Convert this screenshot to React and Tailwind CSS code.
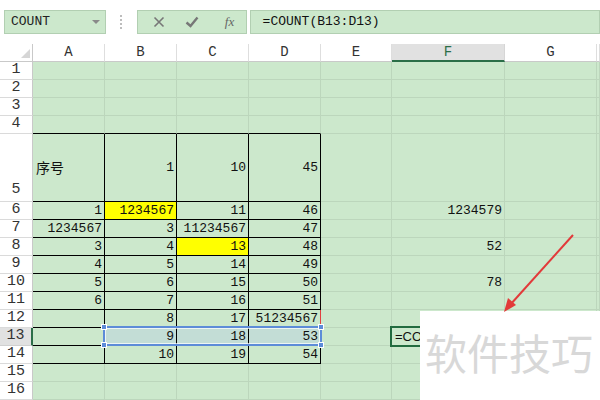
import React from "react";

const mono = { fontFamily: '"Liberation Mono", "DejaVu Sans Mono", monospace' };

// cell values by address
const data = {
  A5: "序号", B5: "1", C5: "10", D5: "45",
  A6: "1", B6: "1234567", C6: "11", D6: "46", F6: "1234579",
  A7: "1234567", B7: "3", C7: "11234567", D7: "47",
  A8: "3", B8: "4", C8: "13", D8: "48", F8: "52",
  A9: "4", B9: "5", C9: "14", D9: "49",
  A10: "5", B10: "6", C10: "15", D10: "50", F10: "78",
  A11: "6", B11: "7", C11: "16", D11: "51",
  B12: "8", C12: "17", D12: "51234567",
  B13: "9", C13: "18", D13: "53",
  B14: "10", C14: "19", D14: "54",
};

const yellow = ["B6", "C8"];
const selected = ["B13", "C13", "D13"];
const letters = ["A", "B", "C", "D", "E", "F", "G", "H"];
const rows = Array.from({ length: 16 }, (_, i) => i + 1);

function Cell({ r, c }) {
  const addr = letters[c] + r;
  const inTable = r >= 5 && r <= 14 && c <= 3;
  const aboveTable = r === 4 && c <= 3;
  const val = data[addr];
  let bg = "bg-[#cce8cc]";
  if (yellow.includes(addr)) bg = "bg-[#ffff00]";
  if (selected.includes(addr)) bg = "bg-[#c3ddd6]";
  const border = inTable
    ? "border-r border-b border-black"
    : aboveTable
    ? "border-r border-r-[#bcd6bc] border-b border-b-black"
    : "border-r border-b border-[#bcd6bc]";
  const h = r === 5 ? "h-[68px]" : "h-[18px]";
  const isText = addr === "A5";
  return (
    <div
      className={`${h} ${bg} ${border} flex items-center ${isText ? "justify-start pl-[3px]" : "justify-end pr-[2px]"} text-[13px] text-[#111] whitespace-nowrap`}
    >
      {isText ? (
        <span className="text-[14px]" style={{ fontFamily: '"Noto Sans CJK SC", sans-serif' }}>{val}</span>
      ) : (
        val
      )}
    </div>
  );
}

function Toolbar() {
  return (
    <div className="h-[44px] flex items-start pt-[10px] pl-[4px] bg-white">
      <div className="w-[102px] h-[24px] bg-[#cce8cc] border border-[#b2cfb2] flex items-center justify-between pl-[6px] pr-[5px] text-[13px] text-[#222]">
        <span>COUNT</span>
        <svg width="8" height="5" viewBox="0 0 8 5"><path d="M0 0h8L4 4z" fill="#8a8a8a" /></svg>
      </div>
      <div className="w-[31px] h-[24px] flex flex-col items-center justify-center gap-[2px]">
        <span className="w-[2px] h-[2px] bg-[#bdbdbd]" />
        <span className="w-[2px] h-[2px] bg-[#bdbdbd]" />
        <span className="w-[2px] h-[2px] bg-[#bdbdbd]" />
        <span className="w-[2px] h-[2px] bg-[#bdbdbd]" />
      </div>
      <div className="w-[110px] h-[24px] bg-[#cce8cc] border border-[#b2cfb2] flex items-center pl-[15px] gap-[20px]">
        <svg width="12" height="12" viewBox="0 0 12 12"><path d="M1.5 1.5l9 9M10.5 1.5l-9 9" stroke="#777" strokeWidth="1.6" /></svg>
        <svg width="14" height="12" viewBox="0 0 14 12"><path d="M1.5 6.5l4 3.5 7-8.5" stroke="#777" strokeWidth="2.4" fill="none" /></svg>
        <span className="text-[13px] italic text-[#666] ml-[6px]" style={{ fontFamily: '"Liberation Serif", serif' }}>fx</span>
      </div>
      <div className="ml-[3px] w-[351px] h-[24px] bg-[#cce8cc] border border-[#b2cfb2] flex items-center pl-[12px] text-[13px] text-[#111]">
        =COUNT(B13:D13)
      </div>
    </div>
  );
}

export default function App() {
  return (
    <div className="w-[600px] h-[400px] bg-white relative overflow-hidden" style={mono}>
      <Toolbar />
      <div className="grid grid-cols-[33px_72px_72px_72px_72px_71px_113px_92px_3px]">
        {/* column headers */}
        <div className="h-[18px] bg-white border-r border-b border-[#c9c9c9] relative">
          <svg className="absolute right-[2px] bottom-[3px]" width="9" height="9" viewBox="0 0 9 9"><path d="M9 0V9H0z" fill="#d6d6d6" /></svg>
        </div>
        {letters.map((l, i) =>
          l === "F" ? (
            <div key={l} className="h-[18px] bg-[#e1e1e1] border-r border-r-[#d6d6d6] border-b-2 border-b-[#2b6e48] flex items-center justify-center text-[14px] text-[#2b6e48]">{l}</div>
          ) : (
            <div key={l} className="h-[18px] bg-white border-r border-r-[#dedede] border-b border-b-[#c9c9c9] flex items-center justify-center text-[14px] text-[#333]">{i < 7 ? l : ""}</div>
          )
        )}
        {rows.map((r) => (
          <React.Fragment key={r}>
            {r === 13 ? (
              <div className="h-[18px] bg-[#e1e1e1] border-r-2 border-r-[#2b6e48] border-b border-b-[#d0d0d0] flex items-center justify-center text-[15px] text-[#333]">{r}</div>
            ) : (
              <div className={`${r === 5 ? "h-[68px] items-end" : "h-[18px] items-center"} bg-white border-r border-r-[#c9c9c9] border-b border-b-[#dadada] flex justify-center text-[15px] text-[#333]`}>{r}</div>
            )}
            {letters.map((l, c) =>
              l === "F" && r === 13 ? (
                <div key={l} className="h-[18px] bg-[#cce8cc] border-r border-b border-[#bcd6bc] flex items-center pl-[3px] text-[13px] text-[#111]" style={{ fontFamily: '"Liberation Sans", sans-serif' }}>
                  {/* rest of the formula sits under the watermark box */}
                  <span className="w-[26px] overflow-hidden whitespace-nowrap">=COUNT(B13:D13)</span>
                </div>
              ) : (
                <Cell key={l} r={r} c={c} />
              )
            )}
          </React.Fragment>
        ))}
      </div>

      {/* red mark on D12 edge */}
      <div className="absolute left-[320px] top-[310px] w-[1px] h-[14px] bg-[#e04040]" />

      {/* selection B13:D13 */}
      <div className="absolute left-[103px] top-[326px] w-[219px] h-[20px] border-2 border-[#5d8cd8]">
        <div className="w-full h-full border border-white/70" />
      </div>
      <div className="absolute left-[101px] top-[324px] w-[6px] h-[6px] bg-[#5d8cd8] border border-white" />
      <div className="absolute left-[101px] top-[342px] w-[6px] h-[6px] bg-[#5d8cd8] border border-white" />
      <div className="absolute left-[318px] top-[324px] w-[6px] h-[6px] bg-[#5d8cd8] border border-white" />
      <div className="absolute left-[318px] top-[342px] w-[6px] h-[6px] bg-[#5d8cd8] border border-white" />

      {/* active cell F13 */}
      <div className="absolute left-[390px] top-[326px] w-[60px] h-[21px] border-2 border-[#226b3f]" />

      {/* watermark box */}
      <div className="absolute left-[420px] top-[311px] w-[180px] h-[89px] bg-white pl-[5px] pt-[20px]">
        <div className="text-[42px] leading-none text-[#d8d8d8] whitespace-nowrap" style={{ fontFamily: '"Noto Sans CJK SC", sans-serif' }}>软件技巧</div>
      </div>

      {/* red arrow */}
      <svg className="absolute left-0 top-0" width="600" height="400" viewBox="0 0 600 400">
        <path d="M573 235L510 305" stroke="#e23a3a" strokeWidth="2" fill="none" />
        <path d="M504 312l4-14 8 7z" fill="#e23a3a" />
      </svg>
    </div>
  );
}
